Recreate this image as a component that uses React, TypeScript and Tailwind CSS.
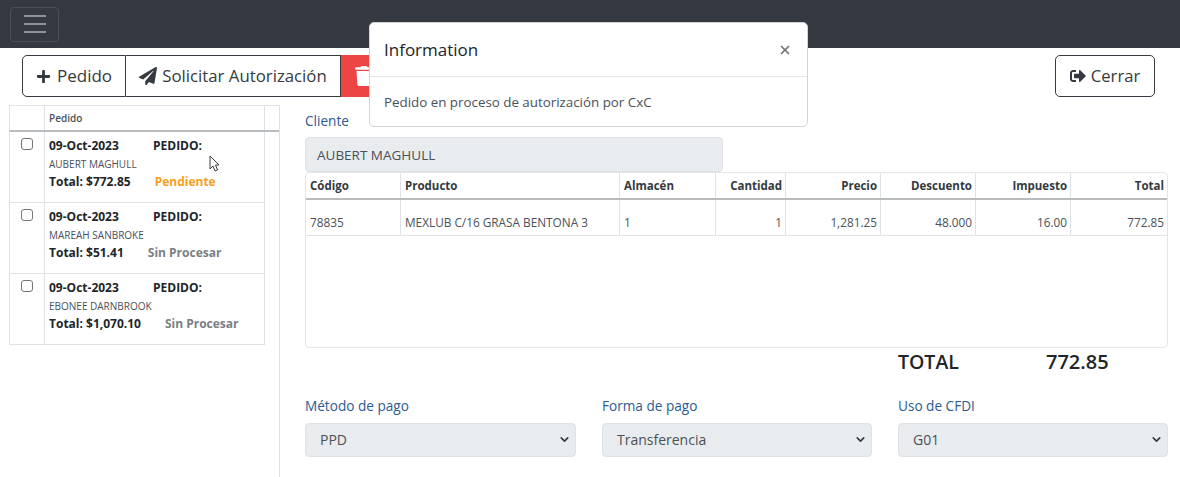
import { X, ChevronDown } from "lucide-react";
import { FaPlus, FaPaperPlane, FaTrash, FaSignOutAlt } from "react-icons/fa";

const pedidos = [
  { nombre: "AUBERT MAGHULL", total: "Total: $772.85", estado: "Pendiente", color: "text-[#f7a01e]" },
  { nombre: "MAREAH SANBROKE", total: "Total: $51.41", estado: "Sin Procesar", color: "text-[#7b7f84]" },
  { nombre: "EBONEE DARNBROOK", total: "Total: $1,070.10", estado: "Sin Procesar", color: "text-[#7b7f84]" },
];

const columnas = [
  { t: "Código", w: "w-[95px]", v: "78835", r: false },
  { t: "Producto", w: "w-[219px]", v: "MEXLUB C/16 GRASA BENTONA 3", r: false },
  { t: "Almacén", w: "w-[96px]", v: "1", r: false },
  { t: "Cantidad", w: "w-[70px]", v: "1", r: true },
  { t: "Precio", w: "w-[95px]", v: "1,281.25", r: true },
  { t: "Descuento", w: "w-[95px]", v: "48.000", r: true },
  { t: "Impuesto", w: "w-[95px]", v: "16.00", r: true },
  { t: "Total", w: "w-[96px]", v: "772.85", r: true },
];

function Campo({ label, value, ancho }: { label: string; value: string; ancho: string }) {
  return (
    <div className={ancho}>
      <div className="text-[13.6px] leading-[20px] text-[#2a5a92]">{label}</div>
      <div className="mt-[7px] flex h-[34px] items-center justify-between rounded-[4px] border border-[#dfe2e6] bg-[#e9ecef] pb-[1px] pl-[14px] pr-[4px] text-[14px] text-[#495057]">
        <span>{value}</span>
        <ChevronDown className="h-[13px] w-[13px] text-[#343a40]" strokeWidth={3} />
      </div>
    </div>
  );
}

export default function App() {
  return (
    <div className="relative h-[477px] w-[1180px] overflow-hidden bg-white font-['Open_Sans',sans-serif] text-[#212529]">
      {/* Navbar */}
      <div className="flex h-[48px] items-center bg-[#343a40] pl-[10px]">
        <button className="flex h-[35px] w-[49px] flex-col items-center justify-center gap-[6px] rounded-[4px] border border-[#4a5056]">
          <span className="h-[2px] w-[22px] bg-[#8f9397]" />
          <span className="h-[2px] w-[22px] bg-[#8f9397]" />
          <span className="h-[2px] w-[22px] bg-[#8f9397]" />
        </button>
      </div>

      {/* Toolbar */}
      <div className="mt-[7px] flex h-[42px] items-stretch justify-between pl-[22px] pr-[25px]">
        <div className="flex">
          <button className="flex w-[104px] items-center justify-center gap-[6px] rounded-l-[5px] border border-[#343a40] text-[17px] text-[#343a40]">
            <FaPlus className="h-[15px] w-[15px]" />
            Pedido
          </button>
          <button className="flex w-[215px] items-center justify-center gap-[5px] border-y border-r border-[#343a40] text-[16.8px] text-[#343a40]">
            <FaPaperPlane className="h-[18px] w-[18px]" />
            Solicitar Autorización
          </button>
          <button className="flex w-[60px] items-center bg-[#ef4444] pl-[14px]">
            <FaTrash className="h-[20px] w-[18px] text-white" />
          </button>
        </div>
        <button className="flex w-[100px] items-center justify-center gap-[5px] rounded-[5px] border border-[#343a40] text-[16.6px] text-[#343a40]">
          <FaSignOutAlt className="h-[16px] w-[16px]" />
          Cerrar
        </button>
      </div>

      <div className="mt-[8px] flex items-start pl-[9px]">
        {/* Lista de pedidos */}
        <div className="h-[372px] w-[271px] shrink-0 border-r border-[#dee2e6]">
          <div className="flex h-[27px] border-l border-t border-b-2 border-[#dee2e6] border-b-[#b9bcbf]">
            <div className="w-[35px] border-r border-[#dee2e6]" />
            <div className="flex w-[220px] items-center border-r border-[#dee2e6] pl-[4px] text-[10px] font-semibold text-[#495057]">Pedido</div>
          </div>
          {pedidos.map((p) => (
            <div key={p.nombre} className="flex h-[71px] w-[256px] border-b border-l border-r border-[#dee2e6]">
              <div className="w-[35px] shrink-0 border-r border-[#dee2e6] pl-[11px] pt-[6px]">
                <div className="h-[12px] w-[12px] rounded-[3px] border border-[#767676] bg-white" />
              </div>
              <div className="pl-[4px] pt-[5px]">
                <div className="flex text-[12px] font-bold leading-[18px] text-[#212529]">
                  <span className="w-[104px]">09-Oct-2023</span>
                  <span>PEDIDO:</span>
                </div>
                <div className="text-[10px] leading-[18px] text-[#495057]">{p.nombre}</div>
                <div className="flex text-[12px] font-bold leading-[18px]">
                  <span>{p.total}</span>
                  <span className={`ml-[24px] ${p.color}`}>{p.estado}</span>
                </div>
              </div>
            </div>
          ))}
        </div>

        {/* Detalle */}
        <div className="ml-[25px] mt-[6px] w-[863px]">
          <div className="text-[13.6px] leading-[20px] text-[#2a5a92]">Cliente</div>
          <div className="mt-[6px] flex h-[35px] w-[418px] items-center rounded-[4px] border border-[#dfe2e6] bg-[#e9ecef] pl-[11px] pt-[1px] text-[13.5px] text-[#495057]">
            AUBERT MAGHULL
          </div>
          <div className="h-[176px] rounded-[4px] border border-[#e3e6e9]">
            <div className="flex h-[27px] border-b-2 border-[#b9bcbf] text-[11.5px] font-bold text-[#343a40]">
              {columnas.map((c) => (
                <div key={c.t} className={`flex items-center border-r border-[#dee2e6] pl-[4px] pr-[3px] last:border-r-0 ${c.w} ${c.r ? "justify-end" : ""}`}>
                  {c.t}
                </div>
              ))}
            </div>
            <div className="flex h-[36px] border-b border-[#dee2e6] text-[11.8px] text-[#495057]">
              {columnas.map((c) => (
                <div key={c.t} className={`flex items-center border-r border-[#dee2e6] pl-[4px] pr-[3px] pt-[11px] last:border-r-0 ${c.w} ${c.r ? "justify-end" : ""}`}>
                  {c.v}
                </div>
              ))}
            </div>
          </div>
          <div className="flex h-[28px] items-center pl-[593px] text-[20px] font-semibold text-[#212529]">
            <span className="w-[148px] text-[19.5px]">TOTAL</span>
            <span>772.85</span>
          </div>
          <div className="mt-[20px] flex gap-[26px]">
            <Campo label="Método de pago" value="PPD" ancho="w-[271px]" />
            <Campo label="Forma de pago" value="Transferencia" ancho="w-[270px]" />
            <Campo label="Uso de CFDI" value="G01" ancho="w-[270px]" />
          </div>
        </div>
      </div>

      {/* Modal */}
      <div className="absolute left-[369px] top-[22px] h-[105px] w-[439px] rounded-[5px] border border-[#d2d4d6] bg-white">
        <div className="flex h-[54px] items-center justify-between border-b border-[#e3e6e9] pl-[14px] pr-[15px]">
          <span className="text-[17px] font-medium leading-none text-[#212529]">Information</span>
          <X className="h-[14px] w-[14px] text-[#6f7378]" strokeWidth={3} />
        </div>
        <div className="pl-[14px] pt-[15px] text-[13.35px] leading-[20px] text-[#495057]">Pedido en proceso de autorización por CxC</div>
      </div>

      {/* Cursor */}
      <svg viewBox="0 0 12 18" className="absolute left-[209px] top-[155px] h-[18px] w-[12px]" fill="white" stroke="#3b3f44" strokeWidth="1">
        <path d="M1 1v13l3-3 2 5 2.5-1-2-5H10z" />
      </svg>
    </div>
  );
}
